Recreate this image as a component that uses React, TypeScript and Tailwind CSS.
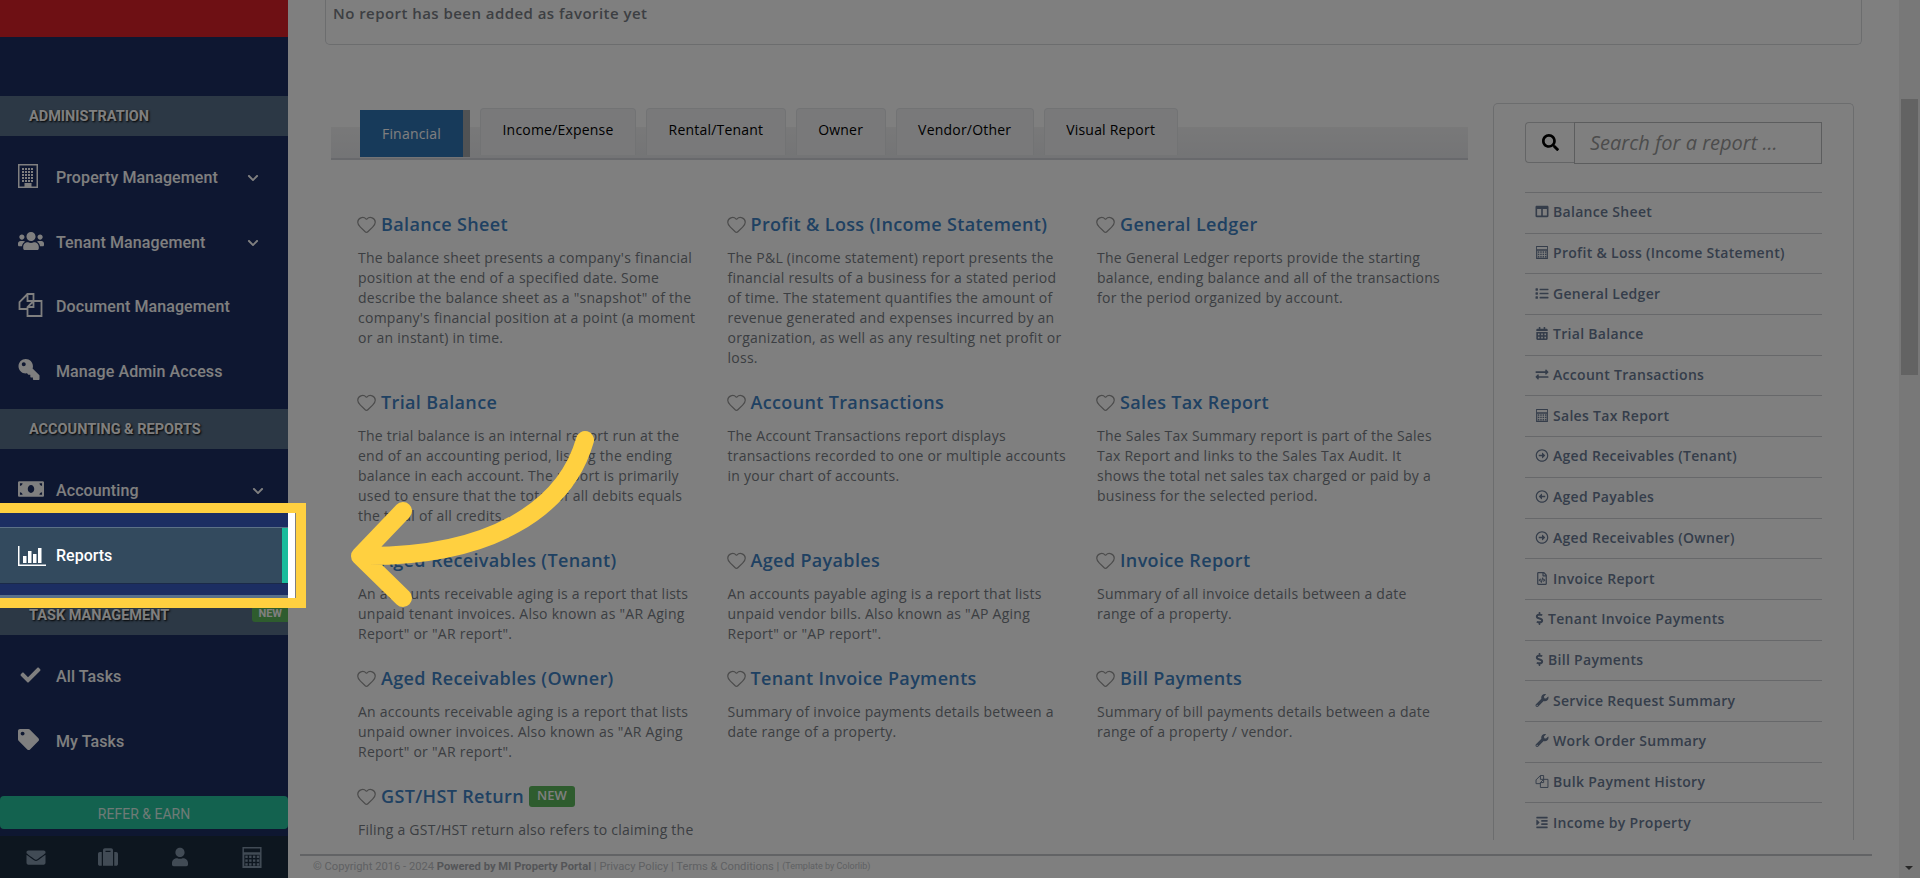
import type { ReactNode } from 'react';
import { Heart } from 'lucide-react';
import {
  FaCalendarAlt,
  FaCheck,
  FaChevronDown,
  FaColumns,
  FaDollarSign,
  FaEnvelope,
  FaExchangeAlt,
  FaIndent,
  FaKey,
  FaList,
  FaMoneyBill,
  FaRegArrowAltCircleLeft,
  FaRegArrowAltCircleRight,
  FaRegFileCode,
  FaSearch,
  FaSuitcase,
  FaTag,
  FaUser,
  FaUsers,
  FaWrench,
} from 'react-icons/fa';

const BuildingIcon = ({ className }: { className?: string }) => (
  <svg viewBox="0 0 20 24" className={className} fill="currentColor">
    <path fillRule="evenodd" d="M0 0h20v24H0zM1.500 1.500v21h5V19h7v3.500h5v-21z" />
    {[4, 7, 10, 13].map((x) =>
      [4, 7, 10, 13, 16].map((y) => <rect key={`${x}-${y}`} x={x} y={y} width="2" height="2" />),
    )}
  </svg>
);

const CopyIcon = ({ className }: { className?: string }) => (
  <svg viewBox="0 0 24 24" className={className} fill="none" stroke="currentColor" strokeWidth="1.8">
    <path d="M9 1h6v7H9zM9 1L1 9v7h8" />
    <path d="M15 8h8v15H9V14zM15 8v6H9" />
  </svg>
);

const ChartIcon = ({ className }: { className?: string }) => (
  <svg viewBox="0 0 28 20" className={className} fill="currentColor">
    <path d="M0 0h1.500v18.500H28V20H0z" />
    <rect x="5" y="10" width="3.500" height="7" />
    <rect x="10" y="5" width="3.500" height="12" />
    <rect x="15" y="8" width="3.500" height="9" />
    <rect x="20" y="2" width="3.500" height="15" />
  </svg>
);

const CalcIcon = ({ className }: { className?: string }) => (
  <svg viewBox="0 0 20 22" className={className} fill="currentColor">
    <path fillRule="evenodd" d="M0 0h20v22H0zM1.500 1.500v4h17v-4zM2 8v12h16V8z" />
    {[3, 7, 11, 15].map((x) =>
      [9, 13, 17].map((y) => <rect key={`${x}-${y}`} x={x} y={y} width="2.500" height="2.500" />),
    )}
  </svg>
);

type NavRow = { label: string; icon: ReactNode; chevron?: boolean };

const adminRows: NavRow[] = [
  { label: 'Property Management', icon: <BuildingIcon className="h-[24px] w-[20px]" />, chevron: true },
  { label: 'Tenant Management', icon: <FaUsers className="h-[24px] w-[26px]" />, chevron: true },
  { label: 'Document Management', icon: <CopyIcon className="h-[24px] w-[25px]" /> },
  { label: 'Manage Admin Access', icon: <FaKey className="h-[21px] w-[22px] -scale-x-100" /> },
];

const taskRows: NavRow[] = [
  { label: 'All Tasks', icon: <FaCheck className="ml-[2px] h-[20px] w-[21px]" /> },
  { label: 'My Tasks', icon: <FaTag className="h-[21px] w-[21px]" /> },
];

function SectionHeader({ children }: { children: ReactNode }) {
  return (
    <div className="flex h-[40px] items-center bg-[#58708a] pt-[1px] pl-[29px] font-['Roboto',sans-serif] text-[14.500px] font-bold text-white [text-shadow:1px_1px_2px_#000]">
      {children}
    </div>
  );
}

function SideRow({ row }: { row: NavRow }) {
  return (
    <div className="flex h-[64.500px] items-center pl-[18px] pr-[28px] font-['Roboto',sans-serif] text-[16px] font-medium tracking-[0.1px] text-white">
      <span className="flex w-[38px] shrink-0 -translate-y-[2px] items-center">{row.icon}</span>
      <span className="flex-1">{row.label}</span>
      {row.chevron && <FaChevronDown className="h-[12px] w-[14px]" />}
    </div>
  );
}

function Sidebar() {
  return (
    <aside className="flex h-screen w-[288px] shrink-0 flex-col bg-[#1c2e62]">
      <div className="h-[37px] bg-[#dc2029]" />
      <div className="h-[59px]" />
      <SectionHeader>ADMINISTRATION</SectionHeader>
      <div className="flex h-[273px] flex-col pt-[10px]">
        {adminRows.map((row) => (
          <SideRow key={row.label} row={row} />
        ))}
      </div>
      <SectionHeader>ACCOUNTING &amp; REPORTS</SectionHeader>
      <div className="flex h-[78px] items-end pb-[4px]">
        <div className="flex h-[64px] w-full items-center pl-[18px] pr-[23px] font-['Roboto',sans-serif] text-[16px] font-medium tracking-[0.1px] text-white">
          <span className="flex w-[38px] shrink-0 -translate-y-[2px] items-center">
            <FaMoneyBill className="h-[24px] w-[26px]" />
          </span>
          <span className="flex-1">Accounting</span>
          <FaChevronDown className="h-[12px] w-[14px]" />
        </div>
      </div>
      <div className="flex h-[57px] items-center border-y border-t-[#5d7287] border-b-[#1b2a49] bg-[#334a5e] pl-[18px] font-['Roboto',sans-serif] text-[16px] font-medium text-white [box-shadow:inset_-6px_0_0_#1abc9c]">
        <ChartIcon className="mr-[10px] h-[20px] w-[28px]" />
        Reports
      </div>
      <div className="h-[11px]" />
      <div className="relative">
        <SectionHeader>TASK MANAGEMENT</SectionHeader>
        <span className="absolute top-[11px] right-0 flex h-[16px] items-center rounded-l-[3px] bg-[#5cb85c] px-[6px] font-['Roboto',sans-serif] text-[11px] font-bold text-white">
          NEW
        </span>
      </div>
      <div className="flex h-[161px] flex-col pt-[10px]">
        {taskRows.map((row) => (
          <SideRow key={row.label} row={row} />
        ))}
      </div>
      <div className="flex h-[33px] items-center justify-center rounded-[4px] bg-[#27c49f] pt-[3px] font-['Roboto',sans-serif] text-[14px] text-[#dcf5ec]">
        REFER &amp; EARN
      </div>
      <div className="mt-[7px] grid flex-1 grid-cols-4 items-center bg-[#1a2c3e] text-[#8396ab]">
        <FaEnvelope className="mx-auto h-[19px] w-[22px]" />
        <FaSuitcase className="mx-auto h-[20px] w-[22px]" />
        <FaUser className="mx-auto h-[20px] w-[16px]" />
        <CalcIcon className="mx-auto h-[21px] w-[20px]" />
      </div>
    </aside>
  );
}

type Card = { title: string; text: string; isNew?: boolean };

const cards: Card[][] = [
  [
    {
      title: 'Balance Sheet',
      text: 'The balance sheet presents a company\'s financial position at the end of a specified date. Some describe the balance sheet as a "snapshot" of the company\'s financial position at a point (a moment or an instant) in time.',
    },
    {
      title: 'Profit & Loss (Income Statement)',
      text: 'The P&L (income statement) report presents the financial results of a business for a stated period of time. The statement quantifies the amount of revenue generated and expenses incurred by an organization, as well as any resulting net profit or loss.',
    },
    {
      title: 'General Ledger',
      text: 'The General Ledger reports provide the starting balance, ending balance and all of the transactions for the period organized by account.',
    },
  ],
  [
    {
      title: 'Trial Balance',
      text: 'The trial balance is an internal report run at the end of an accounting period, listing the ending balance in each account. The report is primarily used to ensure that the total of all debits equals the total of all credits.',
    },
    {
      title: 'Account Transactions',
      text: 'The Account Transactions report displays transactions recorded to one or multiple accounts in your chart of accounts.',
    },
    {
      title: 'Sales Tax Report',
      text: 'The Sales Tax Summary report is part of the Sales Tax Report and links to the Sales Tax Audit. It shows the total net sales tax charged or paid by a business for the selected period.',
    },
  ],
  [
    {
      title: 'Aged Receivables (Tenant)',
      text: 'An accounts receivable aging is a report that lists unpaid tenant invoices. Also known as "AR Aging Report" or "AR report".',
    },
    {
      title: 'Aged Payables',
      text: 'An accounts payable aging is a report that lists unpaid vendor bills. Also known as "AP Aging Report" or "AP report".',
    },
    {
      title: 'Invoice Report',
      text: 'Summary of all invoice details between a date range of a property.',
    },
  ],
  [
    {
      title: 'Aged Receivables (Owner)',
      text: 'An accounts receivable aging is a report that lists unpaid owner invoices. Also known as "AR Aging Report" or "AR report".',
    },
    {
      title: 'Tenant Invoice Payments',
      text: 'Summary of invoice payments details between a date range of a property.',
    },
    {
      title: 'Bill Payments',
      text: 'Summary of bill payments details between a date range of a property / vendor.',
    },
  ],
  [
    {
      title: 'GST/HST Return',
      text: 'Filing a GST/HST return also refers to claiming the',
      isNew: true,
    },
  ],
];

const tabs = ['Income/Expense', 'Rental/Tenant', 'Owner', 'Vendor/Other', 'Visual Report'];

const ic = 'h-[13px] w-[14px] shrink-0';

const reportLinks: { label: string; icon: ReactNode }[] = [
  { label: 'Balance Sheet', icon: <FaColumns className={ic} /> },
  { label: 'Profit & Loss (Income Statement)', icon: <CalcIcon className={ic} /> },
  { label: 'General Ledger', icon: <FaList className={ic} /> },
  { label: 'Trial Balance', icon: <FaCalendarAlt className={ic} /> },
  { label: 'Account Transactions', icon: <FaExchangeAlt className={ic} /> },
  { label: 'Sales Tax Report', icon: <CalcIcon className={ic} /> },
  { label: 'Aged Receivables (Tenant)', icon: <FaRegArrowAltCircleRight className={ic} /> },
  { label: 'Aged Payables', icon: <FaRegArrowAltCircleLeft className={ic} /> },
  { label: 'Aged Receivables (Owner)', icon: <FaRegArrowAltCircleRight className={ic} /> },
  { label: 'Invoice Report', icon: <FaRegFileCode className={ic} /> },
  { label: 'Tenant Invoice Payments', icon: <FaDollarSign className="h-[13px] w-[9px] shrink-0" /> },
  { label: 'Bill Payments', icon: <FaDollarSign className="h-[13px] w-[9px] shrink-0" /> },
  { label: 'Service Request Summary', icon: <FaWrench className={ic} /> },
  { label: 'Work Order Summary', icon: <FaWrench className={ic} /> },
  { label: 'Bulk Payment History', icon: <CopyIcon className={ic} /> },
  { label: 'Income by Property', icon: <FaIndent className={ic} /> },
];

function ReportCard({ card }: { card: Card }) {
  return (
    <div className="pr-[26px] pb-[20px]">
      <div className="flex h-[28px] items-center">
        <Heart className="mr-[4px] -ml-[2px] h-[21px] w-[21px] text-[#999]" strokeWidth={1.4} />
        <h3 className="text-[18px] leading-[28px] font-semibold tracking-[0.35px] text-[#3f82c4]">{card.title}</h3>
        {card.isNew && (
          <span className="ml-[5px] flex h-[21px] items-center rounded-[3px] bg-[#5cb85c] px-[8px] text-[13px] font-semibold text-white">
            NEW
          </span>
        )}
      </div>
      <p className="mt-[10px] text-[14px] leading-[20px] tracking-[0.25px] text-[#777c84]">{card.text}</p>
    </div>
  );
}

function ReportsMain() {
  return (
    <div className="h-[795px] min-w-0 flex-1 overflow-hidden pl-[6px]">
      <div className="relative mt-[63px] flex h-[52px] items-start gap-[10px] pl-[29px]">
        <div className="absolute right-0 bottom-0 left-0 h-[33px] border-b-2 border-[#d0d3d8] bg-[linear-gradient(#f2f2f3,#e8e9ec)]" />
        <div className="relative mt-[2px] mr-[7px] flex h-[47px] w-[103px] items-center justify-center bg-[#2f74b5] text-[14px] tracking-[0.2px] text-white [box-shadow:7px_0_0_#a0a4a8]">
          Financial
        </div>
        {tabs.map((tab) => (
          <div
            key={tab}
            className="relative flex h-[47px] items-center rounded-t-[4px] border border-b-0 border-[#e4e6e9] bg-[#f2f3f5] px-[21.500px] pb-[6px] text-[14px] tracking-[0.2px] text-black"
          >
            {tab}
          </div>
        ))}
      </div>
      <div className="mt-[50px] pl-[27px]">
        {cards.map((row) => (
          <div key={row[0].title} className="grid grid-cols-[369.500px_369.500px_369.500px]">
            {row.map((card) => (
              <ReportCard key={card.title} card={card} />
            ))}
          </div>
        ))}
      </div>
    </div>
  );
}

function SearchPanel() {
  return (
    <aside className="mt-[58px] ml-[25px] h-[737px] w-[361px] shrink-0 overflow-hidden rounded-t-[5px] border border-b-0 border-[#d8dadd] px-[31px] pt-[18px]">
      <div className="flex h-[42px]">
        <div className="flex h-[41px] w-[49px] items-center justify-center rounded-l-[4px] border border-r-0 border-[#c8cacc]">
          <FaSearch className="h-[17px] w-[17px] text-black" />
        </div>
        <div className="flex flex-1 items-center border border-[#b8babc] pl-[15px] text-[20px] text-[#999] italic">
          Search for a report ...
        </div>
      </div>
      <div className="mt-[28px] border-t border-[#cfd1d4]">
        {reportLinks.map((link) => (
          <div
            key={link.label}
            className="flex h-[40.700px] items-center gap-[4px] border-b border-[#cfd1d4] pb-[2px] pl-[10px] text-[14px] font-semibold tracking-[0.3px] text-[#6a7b95] last:border-b-0"
          >
            {link.icon}
            {link.label}
          </div>
        ))}
      </div>
    </aside>
  );
}

function Footer() {
  return (
    <footer className="ml-[12px] mr-[27px] flex h-[24px] items-center border-t-2 border-[#c4c6ca] pl-[13px] font-['Roboto',sans-serif] text-[11.200px] text-[#c0c2c6]">
      © Copyright 2016 - 2024&nbsp;<b className="text-[#a8abb0]">Powered by MI Property Portal</b>&nbsp;| Privacy Policy | Terms
      &amp; Conditions |&nbsp;<span className="text-[9px]">(Template by Colorlib)</span>
    </footer>
  );
}

export default function App() {
  return (
    <div className="relative flex h-screen w-screen overflow-hidden bg-white font-['Open_Sans',sans-serif]">
      <Sidebar />
      <main className="flex h-screen min-w-0 flex-1 flex-col">
        <div className="mx-[37px] flex h-[45px] shrink-0 rounded-b-[5px] border border-t-0 border-[#d8dadd] pl-[7px] text-[15px] leading-[26px] font-semibold tracking-[0.45px] text-[#7a7f86]">
          No report has been added as favorite yet
        </div>
        <div className="flex min-h-0 flex-1 pl-[37px] pr-[45px]">
          <ReportsMain />
          <SearchPanel />
        </div>
        <Footer />
      </main>
      <div className="relative flex h-screen w-[21px] shrink-0 flex-col bg-[#f1f1f1]">
        <div className="mx-[2px] mt-[99px] h-[276px] bg-[#c6c6c6]" />
        <div className="absolute bottom-[8px] left-[6px] h-0 w-0 border-x-[4px] border-t-[4px] border-x-transparent border-t-[#505050]" />
      </div>

      {/* dim layer with a hole over the Reports row */}
      <div className="absolute top-[513px] left-0 h-[85px] w-[295px] shadow-[0_0_0_3000px_rgba(0,0,0,0.5)]" />
      <div className="absolute top-[503px] left-[-20px] h-[105px] w-[326px] border-[10px] border-[#ffd040]" />
      <svg className="pointer-events-none absolute inset-0 h-full w-full" viewBox="0 0 1920 878" fill="none">
        <path
          d="M585 440C565 510 490 556 368 556M403 511L360 556L403 598"
          stroke="#ffd040"
          strokeWidth="18"
          strokeLinecap="round"
          strokeLinejoin="round"
        />
      </svg>
    </div>
  );
}
